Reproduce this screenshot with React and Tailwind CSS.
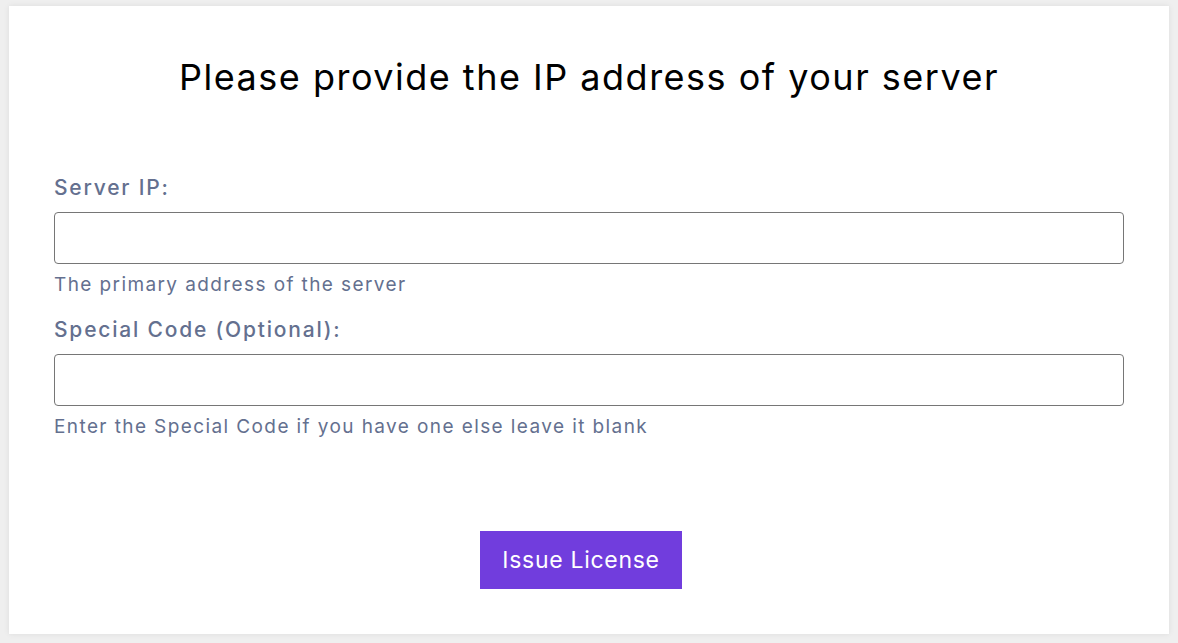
import React, { useState } from "react";

const font = { fontFamily: "Inter, 'Noto Sans', sans-serif" };

const Field = ({ label, hint, value, onChange, className = "" }) => (
  <div className={`flex flex-col ${className}`}>
    <label className="text-[21px] leading-[32px] font-medium tracking-[1.8px] text-[#64708f]">{label}</label>
    <input
      value={value}
      onChange={(e) => onChange(e.target.value)}
      className="mt-[8px] h-[52px] w-full rounded-[4px] border border-[#767676] px-3 text-[18px] outline-none"
    />
    <p className="mt-[7px] text-[19px] leading-[28px] tracking-[1.4px] text-[#64708f]">{hint}</p>
  </div>
);

const App = () => {
  const [ip, setIp] = useState("");
  const [code, setCode] = useState("");

  return (
    <div className="min-h-[643px] bg-[#efefef] pt-[6px] pb-[9px] px-[9px]" style={font}>
      <div className="h-[628px] bg-white px-[45px] pt-[46px] shadow-[0_0_6px_rgba(0,0,0,0.08)]">
        <h1 className="text-center text-[36px] leading-[50px] tracking-[1.5px] text-black">
          Please provide the IP address of your server
        </h1>
        <Field
          className="mt-[70px]"
          label="Server IP:"
          hint="The primary address of the server"
          value={ip}
          onChange={setIp}
        />
        <Field
          className="mt-[15px]"
          label="Special Code (Optional):"
          hint="Enter the Special Code if you have one else leave it blank"
          value={code}
          onChange={setCode}
        />
        <div className="mt-[90px] flex justify-center pr-[16px]">
          <button className="h-[58px] w-[202px] bg-[#713ddd] text-[23px] tracking-[0.7px] text-white">
            Issue License
          </button>
        </div>
      </div>
    </div>
  );
};

export default App;
